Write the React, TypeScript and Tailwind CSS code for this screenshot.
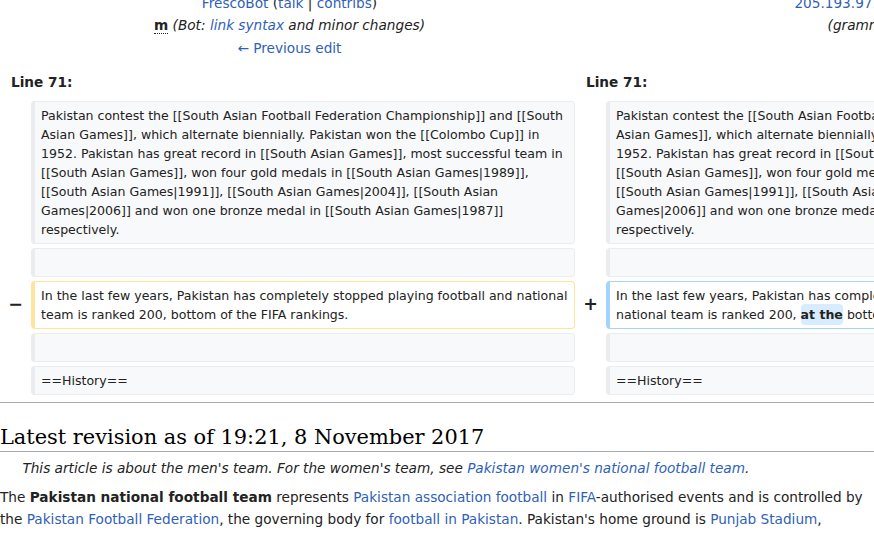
import { FC, ReactNode } from "react";

const link = "text-[#2f5fb8]";

const Box: FC<{ kind?: "context" | "del" | "add"; children?: ReactNode }> = ({ kind = "context", children }) => {
    const tone =
        kind === "del"
            ? "border-[#ffe49c] bg-white"
            : kind === "add"
              ? "border-[#a3d3ff] bg-white"
              : "border-[#eaecf0] bg-[#f8f9fa]";
    return (
        <div
            className={`${tone} min-h-[29px] whitespace-pre-wrap rounded-[4px] border border-l-4 py-1 pl-[6px] pr-[2px] text-[12.55px] leading-[19px] text-[#222]`}
        >
            {children}
        </div>
    );
};

const Marker: FC<{ sign?: string }> = ({ sign }) => (
    <div className="flex items-center justify-end pr-[4px] text-[17.5px] font-bold leading-none text-[#222]">{sign}</div>
);

const Change: FC<{ kind: "del" | "add"; children: ReactNode }> = ({ kind, children }) => (
    <span className={`${kind === "add" ? "bg-[#d8ecff]" : "bg-[#feeec8]"} rounded-[4px] py-[3px] font-bold`}>{children}</span>
);

const intro =
    "Pakistan contest the [[South Asian Football Federation Championship]] and [[South Asian Games]], which alternate biennially. Pakistan won the [[Colombo Cup]] in 1952. Pakistan has great record in [[South Asian Games]], most successful team in [[South Asian Games]], won four gold medals in [[South Asian Games|1989]], [[South Asian Games|1991]], [[South Asian Games|2004]], [[South Asian Games|2006]] and won one bronze medal in [[South Asian Games|1987]] respectively.";

export default function App() {
    return (
        <div className="h-[534px] w-[874px] overflow-hidden bg-white font-['DejaVu_Sans',sans-serif] text-[13.65px] leading-[22px] text-[#222]">
            <div className="-mt-[8px] grid w-[1154px] grid-cols-[23px_544px_23px_544px] gap-x-[4px] gap-y-[4px] px-[4px]">
                {/* revision headers */}
                <div className="col-span-2 text-center leading-[22.4px]">
                    <div>
                        <span className={link}>FrescoBot</span> (<span className={link}>talk</span> |{" "}
                        <span className={link}>contribs</span>)
                    </div>
                    <div>
                        <span className="border-b border-dotted border-[#222] font-bold">m</span>{" "}
                        <span className="italic">
                            (Bot: <span className={link}>link syntax</span> and minor changes)
                        </span>
                    </div>
                    <div className={link}>← Previous edit</div>
                </div>
                <div className="col-span-2 text-center leading-[22.4px]">
                    <div>
                        <span className={link}>205.193.97.83</span> (<span className={link}>talk</span>)
                    </div>
                    <div className="italic">(grammar)</div>
                    <div>&nbsp;</div>
                </div>

                <div className="col-span-2 flex h-[34px] items-center pl-[7px] pt-[4px] font-bold">Line 71:</div>
                <div className="col-span-2 flex h-[34px] items-center pl-[7px] pt-[4px] font-bold">Line 71:</div>

                <Marker />
                <Box>{intro}</Box>
                <Marker />
                <Box>{intro}</Box>

                <Marker />
                <Box />
                <Marker />
                <Box />

                <Marker sign="−" />
                <Box kind="del">
                    In the last few years, Pakistan has completely stopped playing football and national team is ranked 200,
                    bottom of the FIFA rankings.
                </Box>
                <Marker sign="+" />
                <Box kind="add">
                    In the last few years, Pakistan has completely stopped playing football and <Change kind="add">the</Change>{" "}
                    national team is ranked 200, <Change kind="add">at the</Change> bottom of the FIFA rankings.
                </Box>

                <Marker />
                <Box />
                <Marker />
                <Box />

                <Marker />
                <Box>==History==</Box>
                <Marker />
                <Box>==History==</Box>
            </div>

            <div className="mt-[7px] h-px bg-[#a2a9b1]" />

            <h2 className="mt-[21px] border-b border-[#a2a9b1] font-['DejaVu_Serif',serif] text-[20.9px] leading-[27px] text-black">
                Latest revision as of 19:21, 8 November 2017
            </h2>

            <div className="mt-[5px] pl-[22.4px] italic">
                This article is about the men's team. For the women's team, see{" "}
                <span className={link}>Pakistan women's national football team</span>.
            </div>

            <p className="mt-[7px]">
                The <b>Pakistan national football team</b> represents{" "}
                <span className={link}>Pakistan association football</span> in <span className={link}>FIFA</span>-authorised
                events and is controlled by the <span className={link}>Pakistan Football Federation</span>, the governing body
                for <span className={link}>football in Pakistan</span>. Pakistan's home ground is{" "}
                <span className={link}>Punjab Stadium</span>, Lahore, and its main rivals are India and Afghanistan.
            </p>
        </div>
    );
}
